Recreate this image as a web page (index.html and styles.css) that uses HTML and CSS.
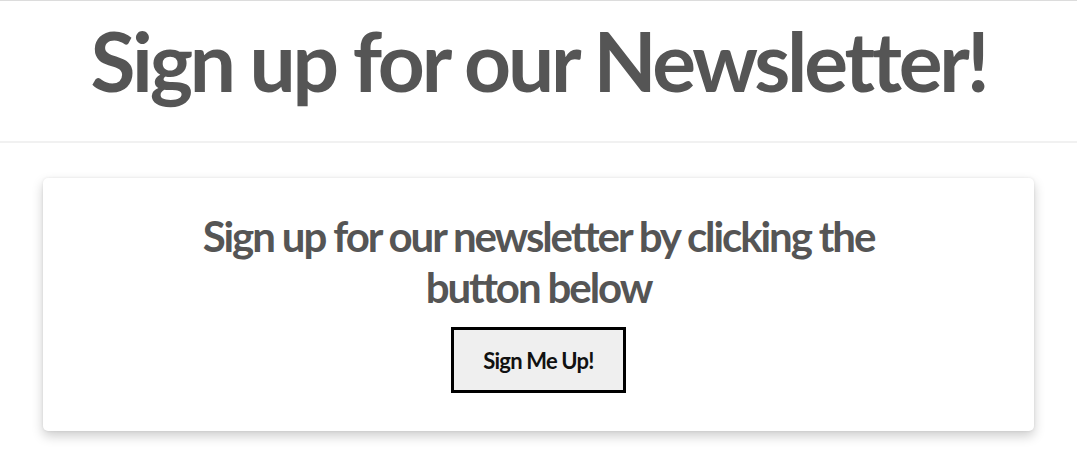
FILE: index.html
```html
<!DOCTYPE html>
<html lang="en">
<head>
<meta charset="utf-8">
<title>Newsletter</title>
<link rel="stylesheet" href="styles.css">
</head>
<body>
<header class="site-header">
  <h1 class="title">Sign up for our Newsletter!</h1>
</header>
<main class="content">
  <section class="card">
    <h2 class="card-title">Sign up for our newsletter by clicking the button below</h2>
    <button class="signup-btn" type="button">Sign Me Up!</button>
  </section>
</main>
</body>
</html>
```
FILE: styles.css
```css
* { box-sizing: border-box; }
html, body { margin: 0; padding: 0; background: #fff; }
body {
  font-family: Lato, "Open Sans", sans-serif;
  color: #555;
  min-height: 472px;
}
.site-header {
  border-top: 1px solid #dcdcdc;
  border-bottom: 2px solid #f1f1f1;
  height: 143px;
  padding-top: 10px;
}
.title {
  margin: 0;
  text-align: center;
  font-size: 82px;
  line-height: 98px;
  font-weight: 700;
  letter-spacing: -0.039em;
  color: #555;
}
.content {
  padding: 35px 0 40px;
}
.card {
  width: 92%;
  margin: 0 auto;
  background: #fff;
  border-radius: 5px;
  box-shadow: 0 5px 12px rgba(0, 0, 0, 0.2), 0 0 3px rgba(0, 0, 0, 0.08);
  padding: 33px 0 38px;
  display: flex;
  flex-direction: column;
  align-items: center;
}
.card-title {
  margin: 0;
  max-width: 720px;
  text-align: center;
  font-size: 42px;
  line-height: 51px;
  font-weight: 700;
  letter-spacing: -0.05em;
  color: #555;
}
.signup-btn {
  margin-top: 14px;
  width: 175px;
  height: 66px;
  border: 3px solid #000;
  border-radius: 0;
  background: #efefef;
  font-family: Lato, "Open Sans", sans-serif;
  font-size: 22px;
  font-weight: 700;
  letter-spacing: -0.037em;
  color: #111;
  padding: 0;
}
```
